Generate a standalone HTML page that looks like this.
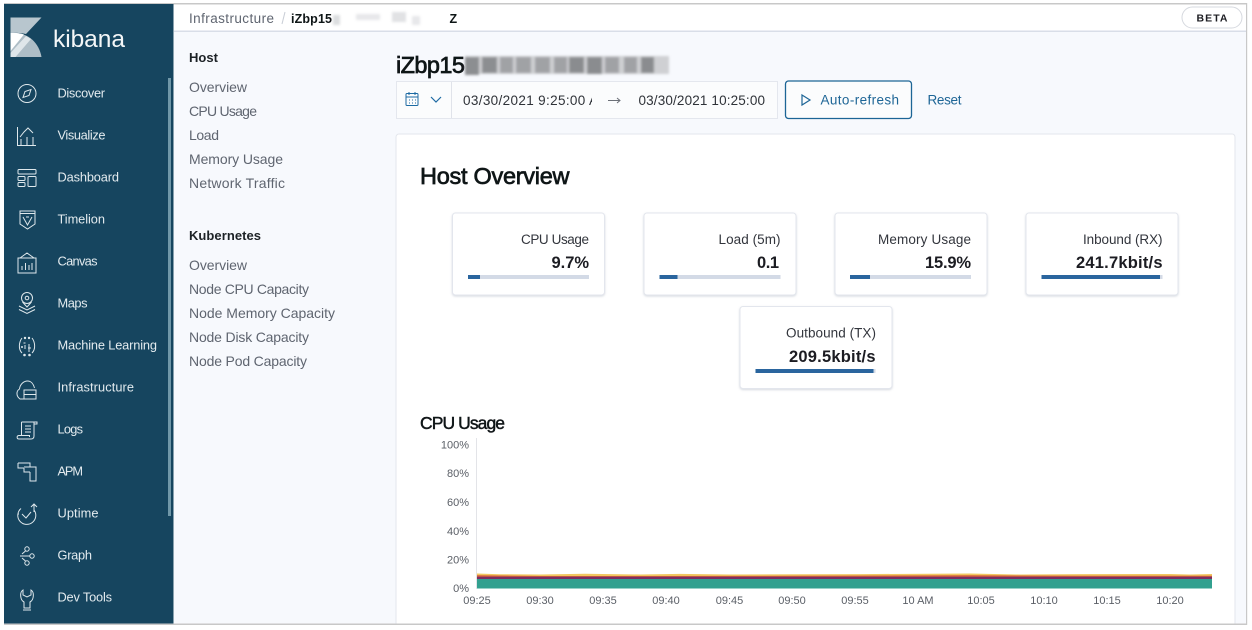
<!DOCTYPE html>
<html><head><meta charset="utf-8"><title>kibana</title>
<style>
html,body{margin:0;padding:0;width:1252px;height:630px;overflow:hidden;background:#fff}
svg{display:block;position:absolute;left:0;top:0}
text{font-family:"Liberation Sans",sans-serif}
.n{fill:#e3ebef;font-size:12.8px}
.s{fill:#5f6570;font-size:14px}
.h{fill:#1f2226;font-size:13px;font-weight:bold}
.c{fill:#33363c;font-size:13.500px}
.v{fill:#1a1c21;font-size:16.500px;font-weight:bold}
.a{fill:#5a5e66;font-size:11px}
.t{fill:#111317;stroke:#111317;stroke-width:.7}
.i{fill:none;stroke:#dfe8ec;stroke-width:1}
</style></head>
<body>
<svg width="1252" height="630" viewBox="0 0 1252 630" xmlns="http://www.w3.org/2000/svg">
<defs><filter id="b" x="-5%" y="-20%" width="110%" height="140%"><feGaussianBlur stdDeviation="1.200"/></filter>
<filter id="sb"><feGaussianBlur stdDeviation="0.3"/></filter>
<filter id="sh" x="-10%" y="-10%" width="120%" height="130%"><feDropShadow dx="0" dy="1" stdDeviation="1" flood-color="#98a2b3" flood-opacity=".4"/></filter></defs>
<g filter="url(#sb)">
<rect x="0" y="0" width="1252" height="630" fill="#fff"/>
<rect x="174" y="31" width="1072" height="593" fill="#f7f9fd"/>
<rect x="174" y="4" width="1072" height="27" fill="#fff"/>
<rect x="174" y="30.500" width="1072" height="1.500" fill="#d9dee8"/>
<rect x="4" y="3" width="1243" height="1.500" fill="#c8c8c8"/>
<rect x="1246" y="3" width="1.200" height="622" fill="#c8c8c8"/>
<rect x="4" y="4" width="169.500" height="620" fill="#15445e"/>
<rect x="168" y="78" width="3" height="438" fill="#6f97a8"/>

<!-- logo -->
<path d="M10.500 17.500H41.500L26 34C21.500 33 16 32.800 10.500 33Z" fill="#b8c6ce"/>
<path d="M10.500 33C27 31.500 39 42 41.500 57H10.500Z" fill="#aebdc6"/>
<path d="M10.500 33C15 32.700 19.500 33 24 34.500L10.500 51Z" fill="#fff"/>
<path d="M26 36L31 39L15.500 57H10.500V53Z" fill="#dfe6ea"/>
<text x="53" y="47" fill="#f4f7f8" font-size="24.500" textLength="72" lengthAdjust="spacing">kibana</text>

<!-- nav -->
<text class="n" x="57.500" y="97.500" textLength="47.500">Discover</text>
<text class="n" x="57.500" y="139.500" textLength="48">Visualize</text>
<text class="n" x="57.500" y="181.500" textLength="61.500">Dashboard</text>
<text class="n" x="57.500" y="223.500" textLength="47.500">Timelion</text>
<text class="n" x="57.500" y="265.500" textLength="40">Canvas</text>
<text class="n" x="57.500" y="307.500" textLength="30">Maps</text>
<text class="n" x="57.500" y="349.500" textLength="99.500">Machine Learning</text>
<text class="n" x="57.500" y="391.500" textLength="76.500">Infrastructure</text>
<text class="n" x="57.500" y="433.500" textLength="25.500">Logs</text>
<text class="n" x="57.500" y="475.500" textLength="25.500">APM</text>
<text class="n" x="57.500" y="517.500" textLength="41">Uptime</text>
<text class="n" x="57.500" y="559.500" textLength="34.500">Graph</text>
<text class="n" x="57.500" y="601.500" textLength="54.500">Dev Tools</text>

<!-- icons -->
<g class="i">
<circle cx="27" cy="93.500" r="9"/><path d="M31 89.500L29 95.500L23 97.500L25 91.500Z"/>
<path d="M17.500 127V145.500H36M20 137L24 132L28 128L33 133M21 145V139M27 145V137M33 145V137"/>
<rect x="18" y="169.500" width="18" height="4.500" rx="1"/><rect x="18" y="176.500" width="7" height="4" rx="1"/><rect x="18" y="182.500" width="7" height="4" rx="1"/><rect x="28" y="176.500" width="8" height="10" rx="1"/>
<path d="M20 211H35V213.500H20ZM20 213.500V224L27.500 229L35 224V213.500M23 217L27.500 225L32 217M26 217H29"/>
<path d="M18 258H36V273H18ZM20 258L27 253L34 258M22 270V266M25.500 270V263M29 270V265M32 270V263"/>
<circle cx="27" cy="298" r="5.500"/><circle cx="27" cy="298" r="1.800"/><path d="M22.500 302L27 307L31.500 302M19 306L27 310L35 306M19 309.500L27 313.500L35 309.500"/>
<path d="M22 338C19 342 18 349 22 353M32 338C35 342 36 349 32 353M25 345V349M29 344V352M23.500 343h2M28 348h3"/>
<path d="M24 399H20C16 396 16 391 19.500 389C20 384 24 381 27.500 381C31 381 33.500 384 34.500 388M24 390H36V399H24ZM24 394.500H36"/>
<path d="M21.500 422H34V436C34 438 33 439 31 439H19C16.500 439 16.500 435.500 19 435.500H29.500V437M21.500 435V422M34 424H37V422H34M25 426H31M25 429H31M25 432H31"/>
<path d="M18 463H30V467M18 463V468H24M24 467H36V477M24 468V472H30M30 472V481H36V477"/>
<path d="M21 508.500A9 9 0 1 0 34 510M34 512V504M31 507L34 504L37 507M22 514L26 518L31 512M18 514h1M19 510h1"/>
<circle cx="27" cy="549" r="2.200"/><circle cx="27" cy="563" r="2.200"/><circle cx="32" cy="556" r="2.200"/><path d="M20 556H30M22 554L25.500 551M22 558L25.500 561"/>
<path d="M23 590C19.500 592 20 600 24 602V608H30V602C34 600 34.500 592 31 590V595L27 597L23 595ZM23 610H31"/>
</g>
<g fill="#dfe8ec"><circle cx="25" cy="338" r="1.200"/><circle cx="29" cy="338" r="1.200"/><circle cx="24.500" cy="355" r="1.300"/><circle cx="29.500" cy="355" r="1.300"/><circle cx="22" cy="347" r="1"/></g>

<!-- breadcrumb -->
<text x="189" y="23" fill="#5f6570" font-size="13.500" textLength="85">Infrastructure</text>
<path d="M285 12L282 24" stroke="#c9ced6" stroke-width="1"/>
<text x="291" y="23" fill="#111317" font-weight="bold" font-size="12.500" textLength="41">iZbp15</text>
<text x="449.500" y="23" fill="#111317" font-weight="bold" font-size="12.500">Z</text>
<g filter="url(#b)" fill="#c4c6ca"><rect x="333" y="15" width="7" height="10" opacity=".6"/><rect x="356" y="14" width="24" height="6" opacity=".4"/><rect x="392" y="12" width="14" height="10" opacity=".5"/><rect x="412" y="16" width="8" height="9" opacity=".4"/></g>
<rect x="1182" y="7" width="60" height="21" rx="10.500" fill="#fff" stroke="#d6d9df"/>
<text x="1196.500" y="21.500" fill="#1a1c21" font-size="10.500" font-weight="bold" textLength="31">BETA</text>

<!-- side nav -->
<text class="h" x="189" y="62" textLength="29">Host</text>
<text class="s" x="189" y="92" textLength="58">Overview</text>
<text class="s" x="189" y="116" textLength="68">CPU Usage</text>
<text class="s" x="189" y="140" textLength="30">Load</text>
<text class="s" x="189" y="164" textLength="94">Memory Usage</text>
<text class="s" x="189" y="188" textLength="96">Network Traffic</text>
<text class="h" x="189" y="240" textLength="72">Kubernetes</text>
<text class="s" x="189" y="270" textLength="58">Overview</text>
<text class="s" x="189" y="294" textLength="120">Node CPU Capacity</text>
<text class="s" x="189" y="318" textLength="146">Node Memory Capacity</text>
<text class="s" x="189" y="342" textLength="120">Node Disk Capacity</text>
<text class="s" x="189" y="366" textLength="118">Node Pod Capacity</text>

<!-- title -->
<text class="t" x="396" y="73" font-size="23.500" textLength="69">iZbp15</text>
<g filter="url(#b)">
<rect x="465" y="56" width="204" height="18" fill="#cfd0d3"/>
<g fill="#8c8e91"><rect x="465" y="57" width="14" height="18"/><rect x="482" y="57" width="15" height="16"/></g>
<g fill="#a0a2a5"><rect x="500" y="57" width="13" height="16"/><rect x="516" y="57" width="15" height="16"/><rect x="535" y="57" width="15" height="16"/><rect x="554" y="57" width="13" height="16"/><rect x="605" y="57" width="14" height="16"/><rect x="624" y="57" width="13" height="16"/></g>
<g fill="#8a8c8f"><rect x="569" y="57" width="15" height="16"/><rect x="587" y="57" width="15" height="17"/><rect x="641" y="57" width="13" height="16"/></g>
</g>

<!-- date picker -->
<rect x="396.500" y="81.500" width="381" height="37" fill="#fbfcfd" stroke="#e4e7ee"/>
<path d="M451.500 82V118" stroke="#e0e3ea"/>
<g fill="none" stroke="#1f6aa3" stroke-width="1"><rect x="406" y="93.500" width="12" height="12" rx="1"/><path d="M406 97H418M409 92V95M415 92V95M409 100h1M412 100h1M415 100h1M409 103h1M412 103h1M415 103h1"/></g>
<path d="M431 97L436 102L441 97" fill="none" stroke="#1f6aa3" stroke-width="1.200"/>
<text x="463" y="105" fill="#2f3238" font-size="13.500" textLength="135" lengthAdjust="spacing">03/30/2021 9:25:00 A</text>
<rect x="592" y="90" width="10" height="20" fill="#fbfcfd"/>
<path d="M608 100.500H620M617 98L620 100.500L617 103" fill="none" stroke="#6c7078"/>
<text x="638.500" y="105" fill="#2f3238" font-size="13.500" textLength="126.500" lengthAdjust="spacing">03/30/2021 10:25:00</text>
<rect x="785.500" y="81" width="126" height="37.500" rx="3" fill="#fbfcfd" stroke="#1f6596" stroke-width="1.300"/>
<path d="M802 95L810 100L802 105Z" fill="none" stroke="#1f6596" stroke-width="1.200"/>
<text x="820.500" y="104.500" fill="#1f6596" font-size="13.500" textLength="78.500">Auto-refresh</text>
<text x="927.500" y="104.500" fill="#1f6596" font-size="13.500" textLength="34">Reset</text>

<!-- main panel -->
<rect x="396" y="134" width="839" height="492" rx="3" fill="#fff" stroke="#e3e6ed"/>
<rect x="4" y="623.500" width="1243" height="1.500" fill="#c8c8c8"/>
<rect x="0" y="625" width="1252" height="5" fill="#fff"/>
<text class="t" x="420" y="184" font-size="23.500" textLength="149.500" lengthAdjust="spacing">Host Overview</text>

<!-- cards -->
<g fill="#fff" stroke="#e3e6ed" filter="url(#sh)">
<rect x="452.500" y="213" width="152" height="82" rx="3"/>
<rect x="644" y="213" width="152" height="82" rx="3"/>
<rect x="835" y="213" width="152" height="82" rx="3"/>
<rect x="1026" y="213" width="152" height="82" rx="3"/>
<rect x="740" y="306.500" width="152" height="82" rx="3"/>
</g>
<text class="c" x="521" y="244" textLength="68">CPU Usage</text>
<text class="v" x="551.500" y="268" textLength="37.500">9.7%</text>
<rect x="468" y="275" width="121" height="4" fill="#d3dae6"/><rect x="468" y="275" width="12" height="4" fill="#2a659e"/>
<text class="c" x="718.500" y="244" textLength="62">Load (5m)</text>
<text class="v" x="757" y="268" textLength="22">0.1</text>
<rect x="659.500" y="275" width="121" height="4" fill="#d3dae6"/><rect x="659.500" y="275" width="18" height="4" fill="#2a659e"/>
<text class="c" x="878" y="244" textLength="93">Memory Usage</text>
<text class="v" x="925" y="268" textLength="46">15.9%</text>
<rect x="850" y="275" width="121" height="4" fill="#d3dae6"/><rect x="850" y="275" width="20" height="4" fill="#2a659e"/>
<text class="c" x="1083" y="244" textLength="79.500">Inbound (RX)</text>
<text class="v" x="1076" y="268" textLength="86.500">241.7kbit/s</text>
<rect x="1041.500" y="275" width="121" height="4" fill="#d3dae6"/><rect x="1041.500" y="275" width="118.500" height="4" fill="#2a659e"/>
<text class="c" x="786" y="337.500" textLength="90">Outbound (TX)</text>
<text class="v" x="789" y="362" textLength="86.500">209.5kbit/s</text>
<rect x="755.500" y="369" width="120" height="4" fill="#d3dae6"/><rect x="755.500" y="369" width="118" height="4" fill="#2a659e"/>

<!-- chart -->
<text class="t" x="420" y="429" font-size="17.500" textLength="85" style="stroke-width:.45">CPU Usage</text>
<g class="a" text-anchor="end">
<text x="469" y="448.500">100%</text><text x="469" y="477">80%</text><text x="469" y="506">60%</text><text x="469" y="535">40%</text><text x="469" y="563.500">20%</text><text x="469" y="592">0%</text>
</g>
<path d="M476.500 438V589" stroke="#e3e4e8" stroke-width="1"/>
<path d="M477 573.500L500 574.200L540 574.500L585 573.800L640 574.500L680 573.900L730 574.500L800 574.300L860 574.100L970 573.500L1020 574.500L1080 574.100L1170 574L1190 574.500L1212 574V579H477Z" fill="#f2c75f"/>
<path d="M477 575.300L540 576L640 576L800 575.800L970 575.300L1080 575.800L1170 575.700L1212 575.700V580H477Z" fill="#d5603c"/>
<path d="M477 576.800H1212V580.500H477Z" fill="#7d2f62"/>
<rect x="477" y="579" width="735" height="9.500" fill="#31a08f"/>
<g class="a" text-anchor="middle">
<text x="477" y="604">09:25</text><text x="540" y="604">09:30</text><text x="603" y="604">09:35</text><text x="666" y="604">09:40</text><text x="729.500" y="604">09:45</text><text x="792" y="604">09:50</text><text x="855" y="604">09:55</text><text x="918" y="604">10 AM</text><text x="981" y="604">10:05</text><text x="1044" y="604">10:10</text><text x="1107" y="604">10:15</text><text x="1170" y="604">10:20</text>
</g>
</g>
</svg>
</body></html>
